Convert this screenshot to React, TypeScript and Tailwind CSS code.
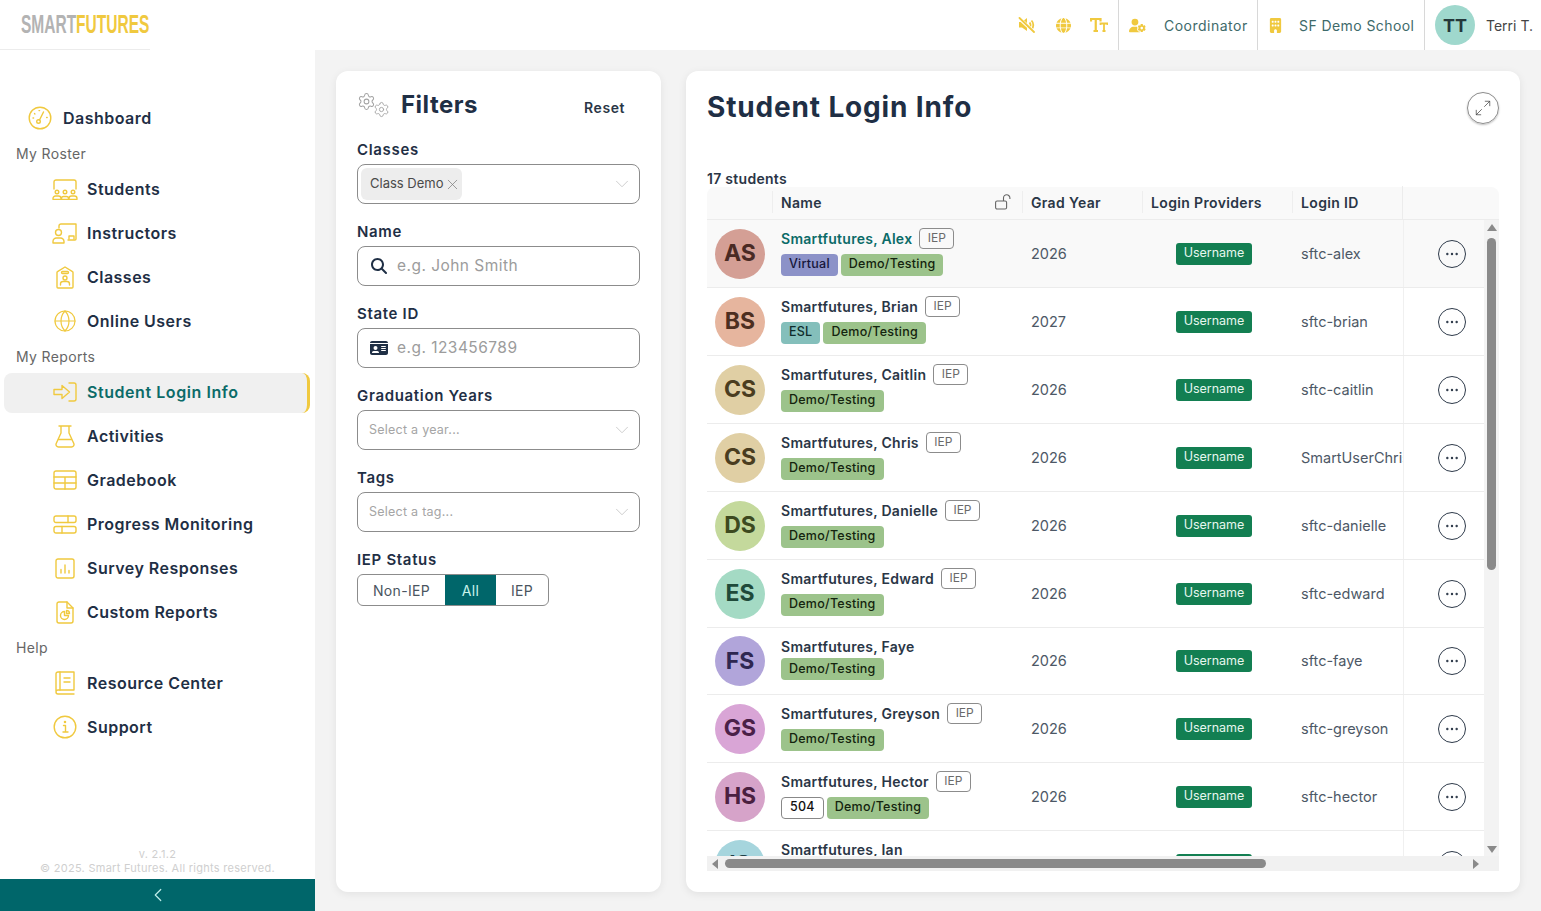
import React from 'react';
import { ChevronDown, ChevronLeft, Ellipsis, Globe, Maximize2, Settings, X } from 'lucide-react';
import { FaBuilding, FaGlobe, FaIdCard, FaMagnifyingGlass, FaUserGear } from 'react-icons/fa6';

const YELLOW = '#f0c93f';

const iconProps = {
  fill: 'none',
  stroke: YELLOW,
  strokeWidth: 1.4,
  strokeLinecap: 'round' as const,
  strokeLinejoin: 'round' as const,
};

const DashboardIcon = () => (
  <svg width="24" height="24" viewBox="0 0 24 24" {...iconProps}>
    <circle cx="12" cy="12" r="10.8" />
    <circle cx="10.5" cy="15.5" r="1.8" />
    <path d="M11.5 14L15.5 6M5 12h.6M6.5 7.5l.4.4M11 4.6h.6M18.6 11.5h.6" />
  </svg>
);

const StudentsIcon = () => (
  <svg width="26" height="21" viewBox="0 0 26 21" {...iconProps}>
    <path d="M2 10V3a2 2 0 0 1 2-2h18a2 2 0 0 1 2 2v7" />
    <circle cx="5" cy="13" r="1.8" />
    <circle cx="13" cy="13" r="1.8" />
    <circle cx="21" cy="13" r="1.8" />
    <path d="M1 20v-.5a2.5 2.5 0 0 1 2.5-2.5h3A2.5 2.5 0 0 1 9 19.5v.5M9.500 20v-.5a2 2 0 0 1 2-2h3a2 2 0 0 1 2 2v.5M17 20v-.5a2.500 2.500 0 0 1 2.500-2.500h3a2.500 2.500 0 0 1 2.500 2.500v.5M1 20.400h8M9.500 20.400h7M17 20.400h8" />
  </svg>
);

const InstructorsIcon = () => (
  <svg width="26" height="21" viewBox="0 0 26 21" {...iconProps}>
    <path d="M7 5V3a2 2 0 0 1 2-2h15v15a1 1 0 0 1-1 1H16" />
    <path d="M17 16v-3h5v3" />
    <circle cx="6.500" cy="9.500" r="3" />
    <path d="M1 20v-1.500A3.500 3.500 0 0 1 4.500 15h4a3.500 3.500 0 0 1 3.500 3.500V20z" />
  </svg>
);

const ClassesIcon = () => (
  <svg width="18" height="23" viewBox="0 0 18 23" {...iconProps}>
    <path d="M1 6.500a1 1 0 0 1 .5-.8L9 1l7.500 4.700a1 1 0 0 1 .5.8V21a1 1 0 0 1-1 1H2a1 1 0 0 1-1-1z" />
    <rect x="5.500" y="5.500" width="7" height="2" rx="1" />
    <circle cx="9" cy="12" r="2" />
    <path d="M4.500 19v-1a2.500 2.500 0 0 1 2.500-2.500h4a2.500 2.500 0 0 1 2.500 2.500v1" />
  </svg>
);

const LoginIcon = () => (
  <svg width="24" height="20" viewBox="0 0 24 20" {...iconProps}>
    <path d="M1 7.500h8V3.500L16.500 10 9 16.500v-4H1z" />
    <path d="M16 1h5a2 2 0 0 1 2 2v14a2 2 0 0 1-2 2h-5" />
  </svg>
);

const FlaskIcon = () => (
  <svg width="20" height="23" viewBox="0 0 20 23" {...iconProps}>
    <path d="M4 1h12M6 1v7L1.200 18.500A2.500 2.500 0 0 0 3.500 22h13a2.500 2.500 0 0 0 2.300-3.500L14 8V1" />
    <path d="M3.500 14.500h13" />
  </svg>
);

const GradebookIcon = () => (
  <svg width="24" height="20" viewBox="0 0 24 20" {...iconProps}>
    <rect x="1" y="1" width="22" height="18" rx="2" />
    <path d="M1 7h22M1 13h22M12 7v12" />
  </svg>
);

const ProgressIcon = () => (
  <svg width="24" height="19" viewBox="0 0 24 19" {...iconProps}>
    <rect x="1" y="1" width="22" height="6.500" rx="2" />
    <rect x="1" y="11.500" width="22" height="6.500" rx="2" />
    <path d="M15 1v6.500M9 11.500V18" />
  </svg>
);

const SurveyIcon = () => (
  <svg width="20" height="21" viewBox="0 0 20 21" {...iconProps}>
    <rect x="1" y="1" width="18" height="19" rx="2" />
    <path d="M6 11.500V15M10 7v8M14 12.500V15" />
  </svg>
);

const CustomIcon = () => (
  <svg width="18" height="23" viewBox="0 0 18 23" {...iconProps}>
    <path d="M11 1H3a2 2 0 0 0-2 2v17a2 2 0 0 0 2 2h12a2 2 0 0 0 2-2V7z" />
    <path d="M11 1v6h6" />
    <path d="M8.500 10.500a4 4 0 1 0 4 4h-4z" />
    <path d="M10.500 9.500a3 3 0 0 1 3 3h-3z" />
  </svg>
);

const BookIcon = () => (
  <svg width="20" height="24" viewBox="0 0 20 24" {...iconProps}>
    <path d="M1 20V3a2 2 0 0 1 2-2h16v18H3a2 2 0 0 0-2 2 2 2 0 0 0 2 2h16" />
    <path d="M5 1v18M9 7h6M9 11h6" />
  </svg>
);

const InfoIcon = () => (
  <svg width="24" height="24" viewBox="0 0 24 24" {...iconProps}>
    <circle cx="12" cy="12" r="10.800" />
    <path d="M10.500 10.500H12.500V17M10 17h5" />
    <circle cx="12" cy="7" r=".6" />
  </svg>
);

const MutedIcon = () => (
  <svg width="18" height="16" viewBox="0 0 18 16" fill={YELLOW}>
    <path d="M1 5h3l5-4v13L4 10.500H1z" />
    <path d="M11.500 5.500a3.500 3.500 0 0 1 0 5M13.500 3.500a6.500 6.500 0 0 1 0 9" fill="none" stroke={YELLOW} strokeWidth="1.800" />
    <path d="M1 1l15 14" stroke="#ffffff" strokeWidth="3.500" />
    <path d="M1.500 1l14.500 14" stroke={YELLOW} strokeWidth="1.800" strokeLinecap="round" />
  </svg>
);

const TextSizeIcon = () => (
  <svg width="18" height="14" viewBox="0 0 18 14" fill="none" stroke={YELLOW} strokeWidth="2.200">
    <path d="M1 3.500V1h9.500v2.500M5.750 1v12M3.500 13h4.500" />
    <path d="M10.500 7V5.500h7V7M14 5.500V13M12.500 13h3" strokeWidth="1.800" />
  </svg>
);

const OpenLockIcon = () => (
  <svg width="17" height="16" viewBox="0 0 17 16" fill="none" stroke="#666666" strokeWidth="1.100" className="ml-auto mr-[10px]">
    <rect x=".6" y="7" width="11" height="8" rx="1.500" />
    <path d="M8.500 7V4a3.200 3.200 0 0 1 6.400 0v1" />
  </svg>
);

type NavEntry = { label: string; icon: React.ReactNode; active?: boolean };

const ROSTER: NavEntry[] = [
  { label: 'Students', icon: <StudentsIcon /> },
  { label: 'Instructors', icon: <InstructorsIcon /> },
  { label: 'Classes', icon: <ClassesIcon /> },
  { label: 'Online Users', icon: <Globe size={24} color={YELLOW} strokeWidth={1.2} /> },
];

const REPORTS: NavEntry[] = [
  { label: 'Student Login Info', icon: <LoginIcon />, active: true },
  { label: 'Activities', icon: <FlaskIcon /> },
  { label: 'Gradebook', icon: <GradebookIcon /> },
  { label: 'Progress Monitoring', icon: <ProgressIcon /> },
  { label: 'Survey Responses', icon: <SurveyIcon /> },
  { label: 'Custom Reports', icon: <CustomIcon /> },
];

const HELP: NavEntry[] = [
  { label: 'Resource Center', icon: <BookIcon /> },
  { label: 'Support', icon: <InfoIcon /> },
];

type Student = {
  name: string;
  initials: string;
  avatar: string;
  ink: string;
  grad: string;
  login: string;
  tags: string[];
  iep?: boolean;
  hover?: boolean;
  height?: string;
};

const STUDENTS: Student[] = [
  { name: 'Smartfutures, Alex', initials: 'AS', avatar: 'bg-[#d49f95]', ink: 'text-[#4a2a24]', grad: '2026', login: 'sftc-alex', tags: ['Virtual', 'Demo/Testing'], iep: true, hover: true },
  { name: 'Smartfutures, Brian', initials: 'BS', avatar: 'bg-[#e6b59e]', ink: 'text-[#4d2e20]', grad: '2027', login: 'sftc-brian', tags: ['ESL', 'Demo/Testing'], iep: true },
  { name: 'Smartfutures, Caitlin', initials: 'CS', avatar: 'bg-[#e0cfa4]', ink: 'text-[#4a3d20]', grad: '2026', login: 'sftc-caitlin', tags: ['Demo/Testing'], iep: true },
  { name: 'Smartfutures, Chris', initials: 'CS', avatar: 'bg-[#e0cfa4]', ink: 'text-[#4a3d20]', grad: '2026', login: 'SmartUserChris', tags: ['Demo/Testing'], iep: true },
  { name: 'Smartfutures, Danielle', initials: 'DS', avatar: 'bg-[#c4d99c]', ink: 'text-[#3d4a20]', grad: '2026', login: 'sftc-danielle', tags: ['Demo/Testing'], iep: true },
  { name: 'Smartfutures, Edward', initials: 'ES', avatar: 'bg-[#a4dac4]', ink: 'text-[#1f4a3a]', grad: '2026', login: 'sftc-edward', tags: ['Demo/Testing'], iep: true },
  { name: 'Smartfutures, Faye', initials: 'FS', avatar: 'bg-[#b1a5da]', ink: 'text-[#2e2750]', grad: '2026', login: 'sftc-faye', tags: ['Demo/Testing'], height: 'h-[67px]' },
  { name: 'Smartfutures, Greyson', initials: 'GS', avatar: 'bg-[#d9a5d6]', ink: 'text-[#4a2048]', grad: '2026', login: 'sftc-greyson', tags: ['Demo/Testing'], iep: true },
  { name: 'Smartfutures, Hector', initials: 'HS', avatar: 'bg-[#d6a3c9]', ink: 'text-[#4a2040]', grad: '2026', login: 'sftc-hector', tags: ['504', 'Demo/Testing'], iep: true },
  { name: 'Smartfutures, Ian', initials: 'IS', avatar: 'bg-[#a6d5dd]', ink: 'text-[#1f4048]', grad: '2026', login: 'sftc-ian', tags: ['Demo/Testing'] },
];

const tagStyle = (tag: string) => {
  if (tag === 'Virtual') return 'bg-[#8c92c8] text-[#16163a]';
  if (tag === 'ESL') return 'bg-[#84bfbb] text-[#0f2c2c]';
  if (tag === '504') return 'bg-white border border-[#888888] text-[#111111]';
  return 'bg-[#9cc38b] text-[#14240e]';
};

const NavItem = ({ item }: { item: NavEntry }) => (
  <div
    className={`flex h-[44px] items-center ${
      item.active ? 'ml-[4px] w-[306px]' : 'ml-[52px]'
    }`}
  >
    {item.active ? (
      <div className="mt-[1px] flex h-[40px] w-full items-center rounded-lg border-r-[3px] border-[#f0c93f] bg-[#f0f0f0] pb-[1px] pl-[48px]">
        <span className="flex w-[26px] justify-center">{item.icon}</span>
        <span className="ml-[9px] text-[16px] font-semibold text-[#0b6b68] tracking-[0.035em]">{item.label}</span>
      </div>
    ) : (
      <>
        <span className="flex w-[26px] justify-center">{item.icon}</span>
        <span className="ml-[9px] text-[16px] font-semibold text-[#1f2f45] tracking-[0.03em]">{item.label}</span>
      </>
    )}
  </div>
);

const NavLabel = ({ children }: { children: string }) => (
  <div className="flex h-[27px] items-center pl-[16px] text-[14px] text-[#666666] tracking-[0.025em]">{children}</div>
);

const Sidebar = () => (
  <aside className="flex w-[315px] shrink-0 flex-col bg-white pt-[46px]">
    <div className="flex h-[44px] items-center pl-[28px]">
      <DashboardIcon />
      <span className="ml-[11px] text-[16px] font-semibold text-[#1f2f45] tracking-[0.03em]">Dashboard</span>
    </div>
    <NavLabel>My Roster</NavLabel>
    {ROSTER.map(item => <NavItem key={item.label} item={item} />)}
    <NavLabel>My Reports</NavLabel>
    {REPORTS.map(item => <NavItem key={item.label} item={item} />)}
    <NavLabel>Help</NavLabel>
    {HELP.map(item => <NavItem key={item.label} item={item} />)}
    <div className="mt-auto pb-[4px] text-center text-[11px] leading-[14px] text-[#cfcfcf] tracking-[0.025em]">
      <div>v. 2.1.2</div>
      <div>© 2025. Smart Futures. All rights reserved.</div>
    </div>
    <div className="flex h-[32px] items-center justify-center bg-[#00666a]">
      <ChevronLeft size={22} color="#bfeeea" strokeWidth={1.3} />
    </div>
  </aside>
);

const Header = () => (
  <header className="flex h-[50px] shrink-0 items-stretch bg-white">
    <div className="flex h-[50px] w-[150px] items-center border-b border-[#ececec] pl-[21px]">
      <div className="w-[128px] origin-left scale-x-[0.62] whitespace-nowrap text-[25px] font-bold font-['Liberation_Sans',sans-serif]">
        <span className="text-[#b3b3b3]">SMART</span>
        <span className="text-[#f0c93f]">FUTURES</span>
      </div>
    </div>
    <div className="ml-auto flex items-center gap-[19.5px] pr-[10px]">
      <MutedIcon />
      <FaGlobe size={15} color={YELLOW} />
      <TextSizeIcon />
    </div>
    <div className="flex w-[139px] items-center border-l border-[#d8d8d8] pl-[10px]">
      <FaUserGear size={17} color={YELLOW} />
      <span className="ml-[18px] text-[14px] text-[#3e6a6a] tracking-[0.035em]">Coordinator</span>
    </div>
    <div className="flex w-[167px] items-center border-l border-[#d8d8d8] pl-[10px]">
      <FaBuilding size={15} color={YELLOW} />
      <span className="ml-[16px] text-[14px] text-[#3e6a6a] tracking-[0.03em]">SF Demo School</span>
    </div>
    <div className="flex w-[117px] items-center border-l border-[#d8d8d8] pl-[10px]">
      <div className="flex h-[40px] w-[40px] items-center justify-center rounded-full bg-[#9fd8cd] text-[18px] font-bold text-[#24383a]">TT</div>
      <span className="ml-[11px] whitespace-nowrap text-[14px] text-[#444444]">Terri T.</span>
    </div>
  </header>
);

const FieldLabel = ({ children }: { children: string }) => (
  <div className="flex h-[18px] items-center text-[15px] font-semibold text-[#1f2f45] tracking-[0.045em]">{children}</div>
);

const SelectBox = ({ children }: { children: React.ReactNode }) => (
  <div className="mb-[19px] mt-[5px] flex h-[40px] w-[283px] items-center rounded-lg border border-[#8c8c8c] pr-[6px]">
    {children}
    <ChevronDown size={22} color="#c4c4c4" strokeWidth={0.9} className="ml-auto" />
  </div>
);

const InputBox = ({ icon, placeholder }: { icon: React.ReactNode; placeholder: string }) => (
  <div className="mb-[19px] mt-[5px] flex h-[40px] w-[283px] items-center rounded-lg border border-[#8c8c8c] pl-[11px]">
    <span className="flex w-[20px] justify-center">{icon}</span>
    <span className="ml-[8px] text-[15.5px] text-[#9c9c9c] tracking-[0.03em]">{placeholder}</span>
  </div>
);

const FiltersPanel = () => (
  <section className="h-[821px] w-[325px] shrink-0 rounded-xl bg-white px-[21px] pt-[19px] shadow-[0_2px_8px_rgba(0,0,0,0.07)]">
    <div className="flex h-[30px] items-center">
      <div className="flex w-[44px] items-start">
        <Settings size={19} color="#a3a3a3" strokeWidth={1.3} />
        <Settings size={17} color="#a3a3a3" strokeWidth={1.3} className="-ml-[3px] mt-[9px]" />
      </div>
      <h2 className="text-[24px] font-bold text-[#1f2f45] tracking-[0.02em]">Filters</h2>
      <button className="ml-auto mr-[15px] mt-[5px] text-[14px] font-semibold text-[#2a3646] tracking-[0.04em]">Reset</button>
    </div>
    <div className="h-[21px]" />
    <FieldLabel>Classes</FieldLabel>
    <SelectBox>
      <div className="ml-[3px] flex h-[32px] items-center rounded-md bg-[#ededed] pl-[9px] pr-[1px] text-[13px] text-[#4a4a4a]">
        Class Demo
        <X size={17} color="#777777" strokeWidth={1} className="ml-[1px]" />
      </div>
    </SelectBox>
    <FieldLabel>Name</FieldLabel>
    <InputBox icon={<FaMagnifyingGlass size={16} color="#1f2f45" />} placeholder="e.g. John Smith" />
    <FieldLabel>State ID</FieldLabel>
    <InputBox icon={<FaIdCard size={18} color="#1f2f45" />} placeholder="e.g. 123456789" />
    <FieldLabel>Graduation Years</FieldLabel>
    <SelectBox>
      <span className="pl-[11px] text-[12.5px] text-[#a5a5a5] tracking-[0.02em]">Select a year...</span>
    </SelectBox>
    <FieldLabel>Tags</FieldLabel>
    <SelectBox>
      <span className="pl-[11px] text-[12.5px] text-[#a5a5a5] tracking-[0.02em]">Select a tag...</span>
    </SelectBox>
    <FieldLabel>IEP Status</FieldLabel>
    <div className="mt-[5px] flex h-[32px] w-[192px] overflow-hidden rounded-md border border-[#8c8c8c] text-[14px] text-[#4a5560] tracking-[0.025em]">
      <div className="flex w-[87px] items-center justify-center">Non-IEP</div>
      <div className="flex w-[51px] items-center justify-center bg-[#00666a] text-[#c9f3ea]">All</div>
      <div className="flex flex-1 items-center justify-center">IEP</div>
    </div>
  </section>
);

const StudentRow = ({ student }: { student: Student }) => (
  <div className={`flex ${student.height ?? 'h-[68px]'} shrink-0 items-center border-b border-[#ececec] ${student.hover ? 'bg-[#f9f9f9]' : 'bg-white'}`}>
    <div className="flex w-[65px] pl-[8px]">
      <div className={`flex h-[50px] w-[50px] items-center justify-center rounded-full text-[23px] font-bold ${student.avatar} ${student.ink}`}>
        {student.initials}
      </div>
    </div>
    <div className={`w-[251px] pl-[9px] ${student.iep ? 'pb-[4px]' : 'pb-[5px]'}`}>
      <div className={`flex items-center ${student.iep ? 'h-[21px]' : 'h-[18px]'}`}>
        <span className={`text-[14px] font-semibold tracking-[0.02em] ${student.hover ? 'text-[#0b6b68]' : 'text-[#2a3646]'}`}>{student.name}</span>
        {student.iep && (
          <span className="ml-[7px] flex h-[21px] w-[35px] items-center justify-center rounded-[4px] border border-[#8c8c8c] text-[12px] text-[#6a6a6a]">IEP</span>
        )}
      </div>
      <div className={`flex gap-[3px] ${student.iep ? 'mt-[5px]' : 'mt-[3px]'}`}>
        {student.tags.map(tag => (
          <span key={tag} className={`flex h-[22px] items-center rounded-[4px] px-[8px] text-[12.5px] font-medium tracking-[0.02em] ${tagStyle(tag)}`}>{tag}</span>
        ))}
      </div>
    </div>
    <div className="w-[120px] pl-[8px] text-[14.5px] text-[#4d5866]">{student.grad}</div>
    <div className="w-[150px] pl-[33px]">
      <span className="flex h-[22px] w-[76px] items-center justify-center rounded-[3px] bg-[#137f52] text-[12.5px] text-[#e6f7ee]">Username</span>
    </div>
    <div className="w-[110px] overflow-hidden whitespace-nowrap pl-[8px] text-[14.5px] text-[#4d5866]">{student.login}</div>
    <div className="flex h-full flex-1 items-center justify-center border-l border-[#f0f0f0] pl-[15px]">
      <div className="flex h-[28px] w-[28px] items-center justify-center rounded-full border-[1.5px] border-[#2e3a4a]">
        <Ellipsis size={16} color="#2e3a4a" strokeWidth={1.6} />
      </div>
    </div>
  </div>
);

const HeaderCell = ({ className, children }: { className: string; children: React.ReactNode }) => (
  <div className={`flex h-[22px] items-center border-l border-[#eeeeee] pl-[8px] text-[14px] font-semibold text-[#2a3646] tracking-[0.025em] ${className}`}>
    {children}
  </div>
);

const StudentTable = () => (
  <div className="flex h-[684px] w-[792px] flex-col">
    <div className="flex h-[33px] shrink-0 items-center rounded-t-lg border-b border-[#ececec] bg-[#f9f9f9] pb-[2px]">
      <div className="w-[65px]" />
      <HeaderCell className="w-[250px]">
        Name
        <OpenLockIcon />
      </HeaderCell>
      <HeaderCell className="w-[120px]">Grad Year</HeaderCell>
      <HeaderCell className="w-[150px]">Login Providers</HeaderCell>
      <HeaderCell className="w-[110px]">Login ID</HeaderCell>
      <div className="h-[33px] flex-1 border-l border-[#ececec]" />
    </div>
    <div className="flex min-h-0 flex-1">
      <div className="min-w-0 flex-1 overflow-hidden">
        {STUDENTS.map(student => <StudentRow key={student.name} student={student} />)}
      </div>
      <div className="flex w-[15px] shrink-0 flex-col items-center bg-[#f3f3f3] pt-[4px]">
        <div className="h-0 w-0 border-x-[5px] border-b-[7px] border-x-transparent border-b-[#8a8a8a]" />
        <div className="mt-[7px] h-[332px] w-[9px] rounded-full bg-[#8a8a8a]" />
        <div className="mb-[3px] mt-auto h-0 w-0 border-x-[5px] border-t-[7px] border-x-transparent border-t-[#8a8a8a]" />
      </div>
    </div>
    <div className="flex h-[15px] shrink-0 items-center bg-[#f1f1f1] pl-[5px]">
      <div className="h-0 w-0 border-y-[5px] border-r-[6px] border-y-transparent border-r-[#8a8a8a]" />
      <div className="ml-[7px] h-[9px] w-[541px] rounded-full bg-[#8a8a8a]" />
      <div className="ml-[207px] h-0 w-0 border-y-[5px] border-l-[6px] border-y-transparent border-l-[#8a8a8a]" />
    </div>
  </div>
);

const MainPanel = () => (
  <section className="h-[821px] w-[834px] shrink-0 rounded-xl bg-white pl-[21px] shadow-[0_2px_8px_rgba(0,0,0,0.08)]">
    <div className="flex h-[75px] items-center pb-[4px] pr-[21px]">
      <h1 className="text-[28px] font-bold text-[#1f2f45] tracking-[0.03em]">Student Login Info</h1>
      <div className="ml-auto mt-[2px] flex h-[32px] w-[32px] items-center justify-center rounded-full border border-[#8c8c8c] shadow-[0_1px_2px_rgba(0,0,0,0.25)]">
        <Maximize2 size={18} color="#444444" strokeWidth={1} />
      </div>
    </div>
    <div className="flex h-[41px] items-end pb-[1px] text-[14px] font-semibold leading-[15px] text-[#2a3646] tracking-[0.02em]">17 students</div>
    <StudentTable />
  </section>
);

export default function App() {
  return (
    <div className="flex h-[911px] w-[1541px] flex-col overflow-hidden bg-[#f3f3f3] font-['Inter','Liberation_Sans',sans-serif]">
      <Header />
      <div className="flex min-h-0 flex-1">
        <Sidebar />
        <main className="flex flex-1 gap-[25px] pl-[21px] pt-[21px]">
          <FiltersPanel />
          <MainPanel />
        </main>
      </div>
    </div>
  );
}
